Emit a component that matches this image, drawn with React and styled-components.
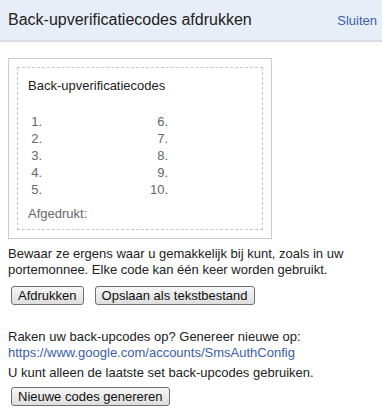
import styled, { createGlobalStyle } from 'styled-components';

const GlobalStyle = createGlobalStyle`
  body {
    margin: 0;
    background: #fff;
    font-family: Arial, "Liberation Sans", sans-serif;
    font-size: 13px;
    color: #222;
  }
`;

const Header = styled.div`
  display: flex;
  justify-content: space-between;
  align-items: center;
  height: 40px;
  padding: 0 5px 0 8px;
  background-color: #e8eef8;
  border-bottom: 2px solid #dadde2;
`;

const Title = styled.h1`
  margin: 0 0 1px;
  font-size: 16px;
  font-weight: normal;
  color: #222;
`;

const CloseLink = styled.a`
  color: #3a5ea8;
  font-size: 13px;
  text-decoration: none;
  cursor: pointer;
`;

const Content = styled.div`
  padding: 16px 8px 0;
`;

const CodeBox = styled.div`
  width: 246px;
  padding: 8px;
  border: 1px solid #cccccc;
`;

const CodeSheet = styled.div`
  padding: 10px 10px 7px;
  border: 1px dashed #c8c8c8;
`;

const SheetTitle = styled.div`
  line-height: 16px;
  color: #222;
  margin-bottom: 19px;
`;

const CodeGrid = styled.div`
  display: flex;
`;

const CodeColumn = styled.div`
  width: ${(p) => p.width}px;
`;

const CodeRow = styled.div`
  display: flex;
  line-height: 17px;
  color: #666;
`;

const Num = styled.span`
  width: ${(p) => p.width}px;
  text-align: right;
`;

const Printed = styled.div`
  margin-top: 8px;
  line-height: 16px;
  color: #666;
`;

const Text = styled.p`
  margin: ${(p) => p.top || 0}px 0 0;
  line-height: 16px;
  color: #222;
`;

const Link = styled.a`
  color: #3a5ea8;
  text-decoration: none;
`;

const ButtonRow = styled.div`
  display: flex;
  gap: 11px;
  margin-top: ${(p) => p.top}px;
  padding-left: 3px;
`;

const Button = styled.button`
  height: 19px;
  padding: 0 6px;
  font-family: Arial, "Liberation Sans", sans-serif;
  font-size: 13px;
  color: #111;
  background: linear-gradient(#f6f6f6, #dedede);
  border: 1px solid #707070;
  border-radius: 3px;
  line-height: 15px;
`;

const left = [1, 2, 3, 4, 5];
const right = [6, 7, 8, 9, 10];

export default function App() {
  return (
    <>
      <GlobalStyle />
      <Header>
        <Title>Back-upverificatiecodes afdrukken</Title>
        <CloseLink>Sluiten</CloseLink>
      </Header>
      <Content>
        <CodeBox>
          <CodeSheet>
            <SheetTitle>Back-upverificatiecodes</SheetTitle>
            <CodeGrid>
              <CodeColumn width={120}>
                {left.map((n) => (
                  <CodeRow key={n}>
                    <Num width={14}>{n}.</Num>
                  </CodeRow>
                ))}
              </CodeColumn>
              <CodeColumn width={100}>
                {right.map((n) => (
                  <CodeRow key={n}>
                    <Num width={20}>{n}.</Num>
                  </CodeRow>
                ))}
              </CodeColumn>
            </CodeGrid>
            <Printed>Afgedrukt:</Printed>
          </CodeSheet>
        </CodeBox>
        <Text top={7}>
          Bewaar ze ergens waar u gemakkelijk bij kunt, zoals in uw portemonnee. Elke code kan één
          keer worden gebruikt.
        </Text>
        <ButtonRow top={8}>
          <Button>Afdrukken</Button>
          <Button>Opslaan als tekstbestand</Button>
        </ButtonRow>
        <Text top={24}>
          Raken uw back-upcodes op? Genereer nieuwe op:
          <br />
          <Link>https://www.google.com/accounts/SmsAuthConfig</Link>
        </Text>
        <Text top={4}>U kunt alleen de laatste set back-upcodes gebruiken.</Text>
        <ButtonRow top={6}>
          <Button>Nieuwe codes genereren</Button>
        </ButtonRow>
      </Content>
    </>
  );
}
